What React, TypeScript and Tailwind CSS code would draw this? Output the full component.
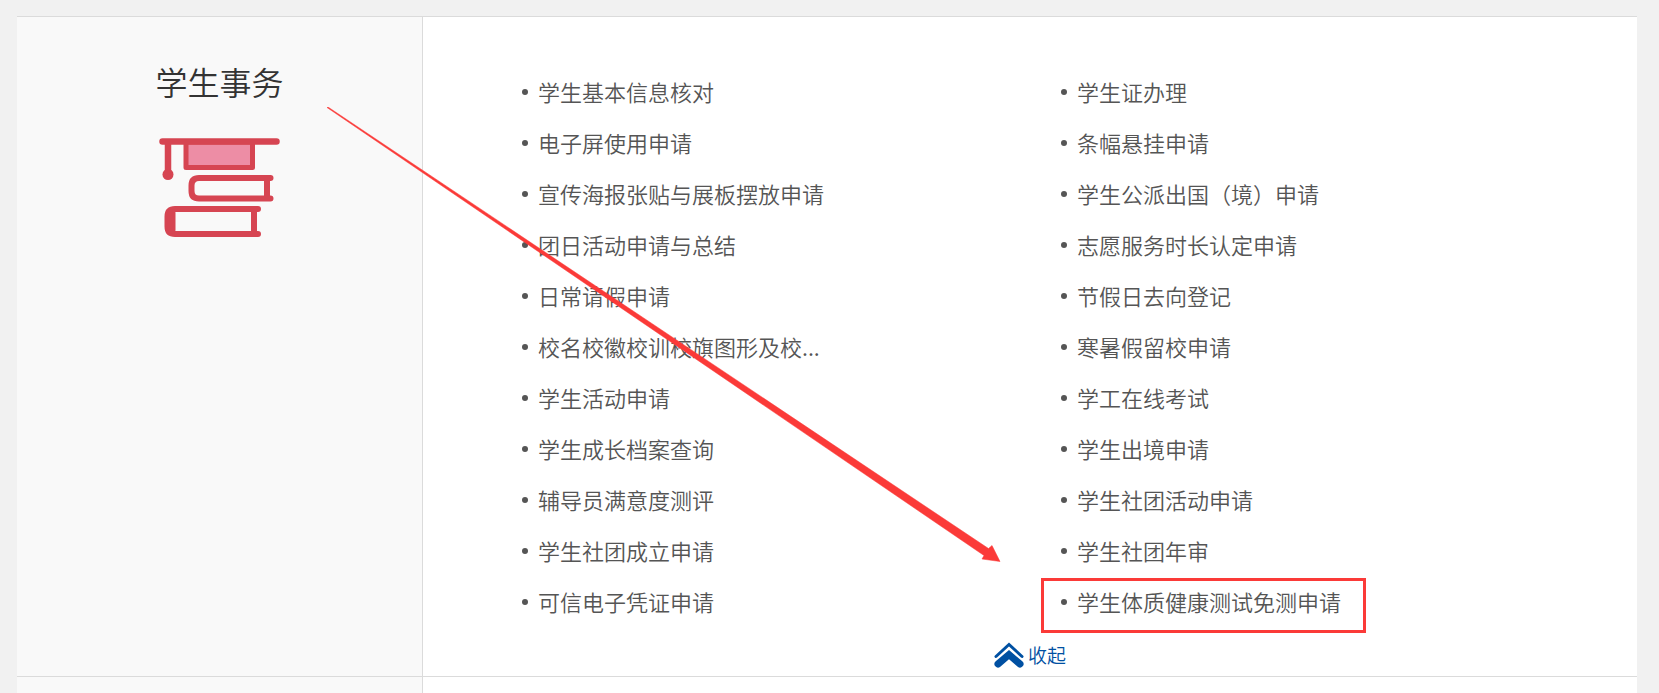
type Service = {
  name: string;
  marked?: boolean;
};

const services: Service[] = [
  { name: "学生基本信息核对" },
  { name: "学生证办理" },
  { name: "电子屏使用申请" },
  { name: "条幅悬挂申请" },
  { name: "宣传海报张贴与展板摆放申请" },
  { name: "学生公派出国（境）申请" },
  { name: "团日活动申请与总结" },
  { name: "志愿服务时长认定申请" },
  { name: "日常请假申请" },
  { name: "节假日去向登记" },
  { name: "校名校徽校训校旗图形及校..." },
  { name: "寒暑假留校申请" },
  { name: "学生活动申请" },
  { name: "学工在线考试" },
  { name: "学生成长档案查询" },
  { name: "学生出境申请" },
  { name: "辅导员满意度测评" },
  { name: "学生社团活动申请" },
  { name: "学生社团成立申请" },
  { name: "学生社团年审" },
  { name: "可信电子凭证申请" },
  { name: "学生体质健康测试免测申请", marked: true },
];

function CapAndBooksIcon() {
  return (
    <svg
      width="122"
      height="100"
      viewBox="0 0 122 100"
      fill="none"
      stroke="#d64552"
      strokeWidth="6"
      strokeLinecap="round"
      aria-hidden="true"
    >
      <path d="M27 5v25.500h66.500V5z" fill="#ed8da5" strokeWidth="5" strokeLinejoin="round" />
      <path d="M3.500 4.500h114M9 5v32" strokeWidth="6.500" />
      <circle cx="9" cy="37.500" r="5.500" fill="#d64552" stroke="none" />
      <path d="M111.500 41H40q-7.500 0-7.500 7.500v5.500q0 7.500 7.500 7.500h71.500M108 41v20" />
      <path d="M99 72H16q-7.500 0-7.500 7.500v10q0 7.500 7.500 7.500h83M95 72v25" />
      <path d="M12.500 76v17" strokeWidth="8" />
    </svg>
  );
}

function CollapseIcon() {
  return (
    <svg width="30" height="26" viewBox="0 0 30 26" fill="none" stroke="#0050a2" strokeLinecap="round" aria-hidden="true">
      <path d="M2 14.500 15 2.500l13 12" strokeWidth="3" />
      <path d="M4 22 15 12.500 26 22" strokeWidth="7" />
    </svg>
  );
}

function Arrow() {
  return (
    <svg
      className="pointer-events-none absolute top-[90px] left-[310px]"
      width="674"
      height="456"
      viewBox="0 0 674 456"
      fill="#fb3a38"
      aria-hidden="true"
    >
      <path d="M0 0.500 1 0 661.500 441.500 665 438.500 673 454.500 655 452 657 448.500z" stroke="#fb3a38" strokeWidth="0.500" />
    </svg>
  );
}

export default function App() {
  return (
    <div className="flex min-h-screen flex-col bg-[#f1f1f1] pt-4 pr-[22px] pl-[17px] font-['Noto_Sans_CJK_SC',sans-serif] font-[350]">
      <section className="relative flex border-t border-[#dbdbdb] bg-white">
        <div className="flex w-1/4 shrink-0 flex-col items-center bg-[#f9f9f9] pt-10">
          <h2 className="text-[32px] leading-[48px] text-[#333]">学生事务</h2>
          <div className="mt-8">
            <CapAndBooksIcon />
          </div>
        </div>
        <div className="flex-1 border-l border-[#dbdbdb] pt-[49px] pb-[5px]">
          <ul className="grid grid-cols-2 pr-10 pl-24">
            {services.map((service) => (
              <li key={service.name} className="relative flex items-center gap-[10px] pl-[3px]">
                <span className="size-[6px] rounded-full bg-[#555]" />
                <a href="#" className="text-[22px] leading-[51px] text-[#555]">
                  {service.name}
                </a>
                {service.marked && (
                  <span className="pointer-events-none absolute top-[2px] -left-[17px] h-[55px] w-[325px] border-3 border-[#fb3a38]" />
                )}
              </li>
            ))}
          </ul>
          <button type="button" className="mx-auto mt-3 flex items-center gap-1 text-[19px] leading-8 text-[#0050a2]">
            <CollapseIcon />
            收起
          </button>
        </div>
        <Arrow />
      </section>
      <section className="flex grow border-t border-[#dbdbdb] bg-white">
        <div className="w-1/4 shrink-0 bg-[#f9f9f9]" />
        <div className="flex-1 border-l border-[#dbdbdb]" />
      </section>
    </div>
  );
}
